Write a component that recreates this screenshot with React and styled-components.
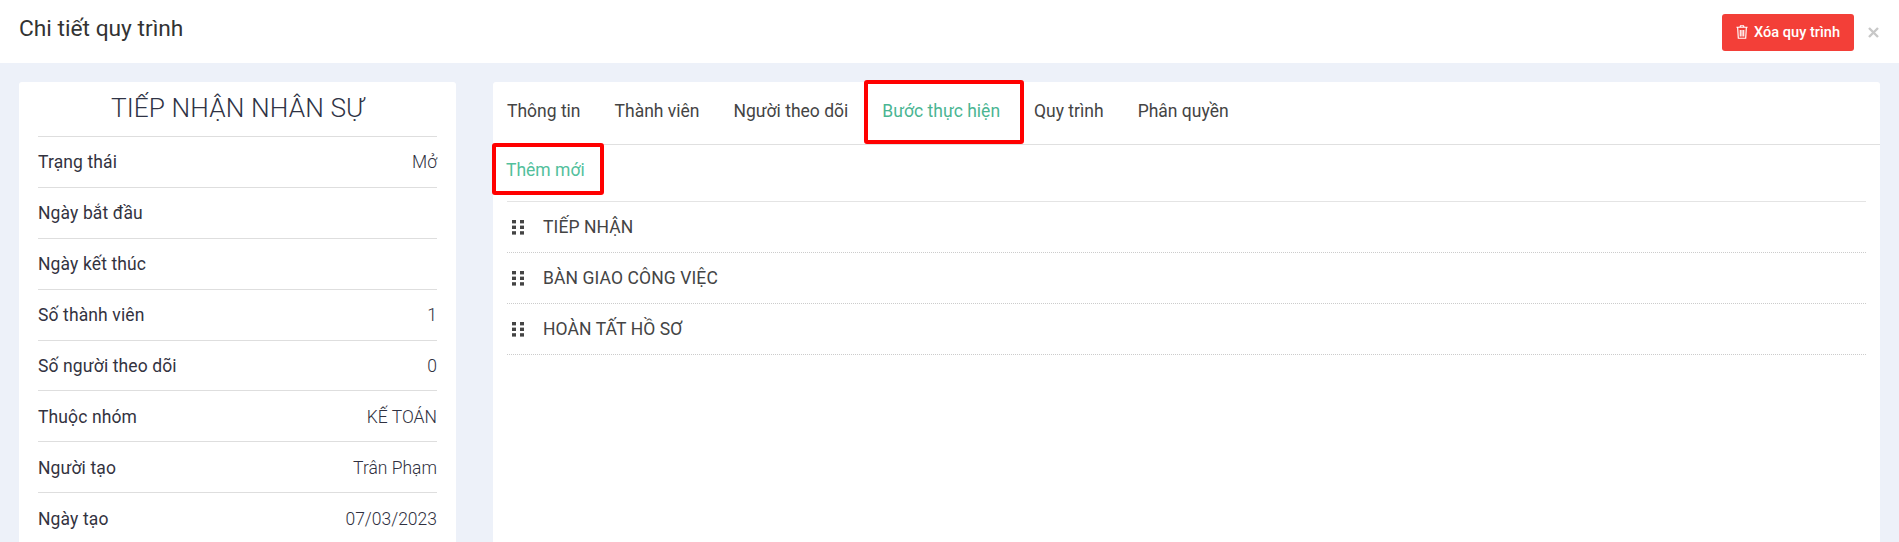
import React from "react";
import styled, { createGlobalStyle } from "styled-components";

const Global = createGlobalStyle`
  html, body { margin: 0; padding: 0; height: 542px; overflow: hidden; background: #edf1f9; }
  * { box-sizing: border-box; }
  body { font-family: Roboto, "Liberation Sans", sans-serif; color: #3f4254; }
`;
const Page = styled.div`height: 542px; overflow: hidden; display: flex; flex-direction: column;`;
const Header = styled.header`
  height: 63px; flex: none; background: #fff; display: flex; align-items: center;
  justify-content: space-between; padding: 0 20px 0 19px;
`;
const Title = styled.h1`margin: -6px 0 0; font-size: 22.75px; line-height: 44px; font-weight: 400; color: #333;`;
const HeaderActions = styled.div`display: flex; align-items: center; gap: 14px;`;
const DangerButton = styled.button`
  height: 37px; width: 132px; margin-top: 1px; border: 0; border-radius: 3px; background: #f33f38; color: #fff;
  font: 500 14.6px Roboto, sans-serif; display: flex; align-items: center; justify-content: center; gap: 6px; padding: 0;
`;
const Close = styled.span`color: #c8c8c8; display: flex; margin-top: 1px;`;
const Body = styled.main`flex: 1; display: flex; gap: 37px; padding: 19px 19px 0; min-height: 0;`;
const Card = styled.section`background: #fff; border-radius: 3px; height: 600px;`;
const InfoCard = styled(Card)`width: 437px; flex: none; padding: 0 19px;`;
const CardTitle = styled.h2`
  margin: 0; height: 55px; border-bottom: 1px solid #dedede; text-align: center;
  font-size: 26.25px; line-height: 52px; font-weight: 300; color: #2f3345; letter-spacing: 0.1px;
`;
const Row = styled.div`
  height: 50.875px; display: flex; align-items: center; justify-content: space-between;
  border-bottom: 1px solid #dedede; font-size: 17.5px; padding-top: 1px; color: #2f3040;
`;
const Label = styled.span`font-weight: 400; color: #33333f; letter-spacing: 0.12px;`;
const Value = styled.span`font-weight: 300;`;
const MainCard = styled(Card)`flex: 1; min-width: 0; position: relative;`;
const Tabs = styled.nav`height: 63px; display: flex; gap: 34px; padding: 0 14px; border-bottom: 1px solid #e0e0e0;`;
const Tab = styled.a`font-size: 17.5px; line-height: 58px; font-weight: 400; color: ${p => (p.$active ? "#4ab592" : "#444")};`;
const Toolbar = styled.div`height: 56px; padding: 0 13px 6px; display: flex; align-items: center;`;
const Add = styled.a`font-size: 17.5px; color: #52c09c;`;
const Steps = styled.ul`list-style: none; margin: 0 14px; padding: 0; border-top: 1px solid #e4e4e4;`;
const Step = styled.li`
  height: 51px; display: flex; align-items: center; gap: 19px; padding-left: 5px;
  border-bottom: 1px dotted #ccc; font-size: 17.5px; color: #444; letter-spacing: 0.1px;
`;
const Marker = styled.span`
  position: absolute; border: 4px solid #f00; border-radius: 3px; pointer-events: none;
  left: ${p => p.$l}px; top: ${p => p.$t}px; width: ${p => p.$w}px; height: ${p => p.$h}px;
`;

const Grip = () => (
  <svg width="12" height="15" viewBox="0 0 12 15" fill="#444">
    <rect x="0" y="0" width="4" height="3.4" /><rect x="8" y="0" width="4" height="3.4" />
    <rect x="0" y="5.6" width="4" height="3.4" /><rect x="8" y="5.6" width="4" height="3.4" />
    <rect x="0" y="11.2" width="4" height="3.4" /><rect x="8" y="11.2" width="4" height="3.4" />
  </svg>
);
const Trash = () => (
  <svg width="12" height="14" viewBox="0 0 448 512" fill="none" stroke="#fff" strokeWidth="44">
    <path d="M16 78h416M150 70l18-48h112l18 48M62 100l24 390h276l24-390M160 180v240M224 180v240M288 180v240" />
  </svg>
);
const X = () => (
  <svg width="11" height="11" viewBox="0 0 11 11" stroke="currentColor" strokeWidth="2.4" fill="none">
    <path d="M1 1l9 9M10 1l-9 9" />
  </svg>
);

const rows = [
  ["Trạng thái", "Mở"], ["Ngày bắt đầu", ""], ["Ngày kết thúc", ""], ["Số thành viên", "1"],
  ["Số người theo dõi", "0"], ["Thuộc nhóm", "KẾ TOÁN"], ["Người tạo", "Trân Phạm"], ["Ngày tạo", "07/03/2023"],
];
const tabs = ["Thông tin", "Thành viên", "Người theo dõi", "Bước thực hiện", "Quy trình", "Phân quyền"];
const steps = ["TIẾP NHẬN", "BÀN GIAO CÔNG VIỆC", "HOÀN TẤT HỒ SƠ"];

export default function App() {
  return (
    <Page>
      <Global />
      <Header>
        <Title>Chi tiết quy trình</Title>
        <HeaderActions>
          <DangerButton><Trash />Xóa quy trình</DangerButton>
          <Close><X /></Close>
        </HeaderActions>
      </Header>
      <Body>
        <InfoCard>
          <CardTitle>TIẾP NHẬN NHÂN SỰ</CardTitle>
          {rows.map(([l, v]) => (
            <Row key={l}><Label>{l}</Label><Value>{v}</Value></Row>
          ))}
        </InfoCard>
        <MainCard>
          <Tabs>
            {tabs.map((t, i) => <Tab key={t} $active={i === 3}>{t}</Tab>)}
          </Tabs>
          <Toolbar><Add>Thêm mới</Add></Toolbar>
          <Steps>
            {steps.map(s => <Step key={s}><Grip />{s}</Step>)}
          </Steps>
          <Marker $l={371} $t={-2} $w={160} $h={64} />
          <Marker $l={-1} $t={61} $w={112} $h={52} />
        </MainCard>
      </Body>
    </Page>
  );
}
